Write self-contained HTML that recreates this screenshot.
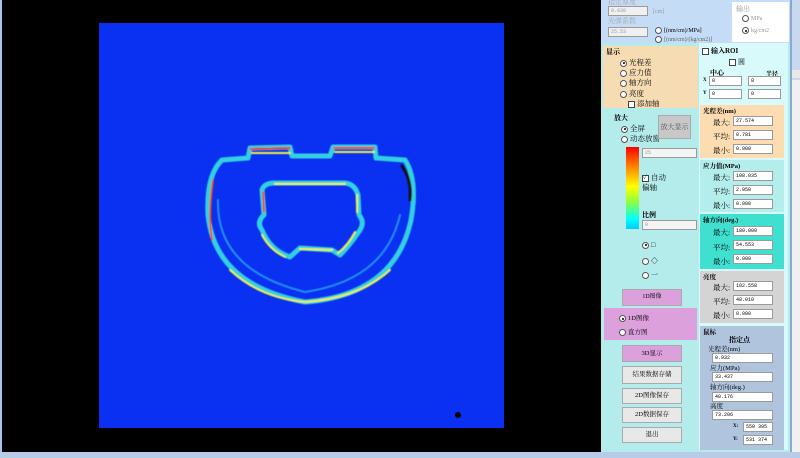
<!DOCTYPE html>
<html><head><meta charset="utf-8"><style>
*{margin:0;padding:0;box-sizing:border-box}
body{width:800px;height:458px;overflow:hidden;background:#000;position:relative;font-family:"Liberation Serif","Noto Serif CJK SC","Noto Sans CJK SC",serif;font-size:7px;color:#000}
.a{position:absolute}
.in{position:absolute;background:#fff;border:1px solid #9a9a9a;font-size:5px;padding-left:2px;line-height:8px;height:10px;font-family:"Liberation Mono",monospace}
.btn{position:absolute;background:#e8e8e8;border:1px solid #aaa;text-align:center;font-size:7px}
.rad{display:inline-block;width:7px;height:7px;border:1px solid #555;border-radius:50%;background:#fff;vertical-align:middle;margin-right:2px;position:relative}
.rad.on::after{content:"";position:absolute;left:1.5px;top:1.5px;width:2px;height:2px;border-radius:50%;background:#000}
.chk{display:inline-block;width:7px;height:7px;border:1px solid #444;background:#fff;vertical-align:middle;margin-right:2px}
b{font-weight:bold}
</style></head><body>
<div class="a" style="left:0;top:0;width:2px;height:458px;background:#a8c4e8"></div>
<div class="a" style="left:0;top:452px;width:800px;height:6px;background:#b8cce8"></div>
<svg class="a" style="left:99px;top:23px" width="405" height="405" viewBox="99 23 405 405">
<defs><filter id="f"><feGaussianBlur stdDeviation="0.5"/></filter></defs>
<rect x="99" y="23" width="405" height="405" fill="#0a30f2"/>
<g fill="none" stroke-linecap="round" stroke-linejoin="round" filter="url(#f)">
<g stroke="#30d0e0" stroke-width="5">
<path d="M222 160 Q206 175 208 215 Q215 285 305 302 Q395 295 411 220 Q418 180 405 160"/>
<path d="M222 160 L248 158 L250 148 L290 147 L292 156 L330 156 L333 147 L375 147 L376 158 L405 160"/>
<path d="M264 215 L262 190 Q264 183 275 183 L345 183 Q355 184 358 195 L359 215 Q365 222 360 230 Q350 245 340 255 L332 250 L300 248 L290 257 Q270 250 262 230 Q256 222 264 215"/>
</g>
<path d="M218 200 Q216 270 305 292 Q385 280 400 215" stroke="#2090f0" stroke-width="2"/>
<g stroke="#f0f040" stroke-width="2">
<path d="M213 180 Q208 215 212 240" stroke="#f05020"/>
<path d="M250 149 L290 148" stroke="#f03020"/>
<path d="M334 148 L374 148" stroke="#f03020"/>
<path d="M252 153 L290 153"/>
<path d="M335 152 L374 152"/>
<path d="M275 184 L345 184"/>
<path d="M264 212 L263 192" stroke="#f04020"/>
<path d="M357 212 L357 195"/>
<path d="M262 235 Q270 250 285 257"/>
<path d="M355 232 Q348 245 338 253"/>
<path d="M300 249 L332 250"/>
<path d="M230 270 Q260 298 305 302 Q360 298 390 270"/>
</g>
<path d="M402 166 Q412 180 410 200" stroke="#101010" stroke-width="3"/>
</g>
<circle cx="458" cy="415" r="3" fill="#000"/>
</svg>
<!-- right panel -->
<div class="a" style="left:601px;top:0;width:189px;height:452px;background:#b4ecec"></div>
<div class="a" style="left:601px;top:0;width:189px;height:43px;background:#c4dcf6"></div>
<div class="a" style="left:790px;top:0;width:10px;height:452px;background:#c8d8ee"></div>
<div class="a" style="left:790px;top:0;width:2px;height:452px;background:#8aa8d0"></div>
<div class="a" style="left:792px;top:70px;width:8px;height:8px;background:#e8e8e8"></div>
<div class="a" style="left:792px;top:80px;width:8px;height:372px;background:#f0f0f0"></div>
<div class="a" style="left:608px;top:-3px;color:#a8a8a8">指定厚度</div>
<div class="in" style="left:608px;top:6px;width:40px;color:#999;background:#f0f0f0">0.030</div>
<div class="a" style="left:653px;top:9px;color:#999;font-size:6px">[cm]</div>
<div class="a" style="left:608px;top:16px;color:#a8a8a8">光弹系数</div>
<div class="in" style="left:608px;top:27px;width:40px;color:#999;background:#f0f0f0">25.53</div>
<div class="a" style="left:655px;top:27px;font-size:6px"><span class="rad"></span>[(nm/cm)/MPa]</div>
<div class="a" style="left:655px;top:36px;font-size:6px;color:#666"><span class="rad"></span>[(nm/cm)/(kg/cm2)]</div>
<div class="a" style="left:732px;top:2px;width:57px;height:40px;background:#fff"></div>
<div class="a" style="left:736px;top:4px;color:#999">输出</div>
<div class="a" style="left:742px;top:15px;color:#999;font-size:6px"><span class="rad"></span>MPa</div>
<div class="a" style="left:742px;top:27px;color:#999;font-size:6px"><span class="rad on"></span>kg/cm2</div>
<!-- display box -->
<div class="a" style="left:603px;top:46px;width:95px;height:62px;background:#f6dcb2"></div>
<div class="a" style="left:606px;top:47px"><b>显示</b></div>
<div class="a" style="left:620px;top:57px;font-size:7.5px"><span class="rad on"></span>光程差</div>
<div class="a" style="left:620px;top:67px;font-size:7.5px"><span class="rad"></span>应力值</div>
<div class="a" style="left:620px;top:77px;font-size:7.5px"><span class="rad"></span>轴方向</div>
<div class="a" style="left:620px;top:88px;font-size:7.5px"><span class="rad"></span>亮度</div>
<div class="a" style="left:628px;top:98px;font-size:7.5px"><span class="chk"></span>添加轴</div>
<div class="a" style="left:614px;top:113px"><b>放大</b></div>
<div class="a" style="left:621px;top:123px;font-size:7.5px"><span class="rad on"></span>全屏</div>
<div class="a" style="left:621px;top:133px;font-size:7.5px"><span class="rad"></span>动态放窗</div>
<div class="btn" style="left:658px;top:115px;width:33px;height:24px;line-height:22px;background:#c8c8c8;color:#555">放大显示</div>
<div class="a" style="left:626px;top:147px;width:13px;height:82px;background:linear-gradient(#f00,#f80 25%,#ff0 48%,#8f4 68%,#0ff 88%,#0cf)"></div>
<div class="in" style="left:642px;top:148px;width:55px;background:#f4f4f4;color:#999">25</div>
<div class="a" style="left:642px;top:172px;font-size:7.5px"><span class="chk" style="font-size:6px;line-height:5px">✓</span>自动</div>
<div class="a" style="left:642px;top:182px;font-size:7.5px">偏轴</div>
<div class="a" style="left:642px;top:210px"><b>比例</b></div>
<div class="in" style="left:642px;top:220px;width:55px;background:#f4f4f4;color:#999">0</div>
<div class="a" style="left:642px;top:241px"><span class="rad on"></span>□</div>
<div class="a" style="left:642px;top:256px"><span class="rad"></span>◇</div>
<div class="a" style="left:642px;top:270px"><span class="rad"></span>一</div>
<div class="btn" style="left:622px;top:289px;width:60px;height:17px;line-height:15px;background:#dca0dc;font-size:6px">1D图像</div>
<div class="a" style="left:604px;top:308px;width:93px;height:32px;background:#dca0dc"></div>
<div class="a" style="left:619px;top:313px;font-size:6.5px"><span class="rad on"></span>1D图像</div>
<div class="a" style="left:619px;top:327px;font-size:6.5px"><span class="rad"></span>直方图</div>
<div class="btn" style="left:622px;top:345px;width:60px;height:17px;line-height:15px;background:#dca0dc;font-size:6.5px">3D显示</div>
<div class="btn" style="left:622px;top:366px;width:60px;height:18px;line-height:16px;font-size:6.5px">结果数据存储</div>
<div class="btn" style="left:622px;top:388px;width:60px;height:16px;line-height:14px;font-size:6.5px">2D图像保存</div>
<div class="btn" style="left:622px;top:407px;width:60px;height:16px;line-height:14px;font-size:6.5px">2D数据保存</div>
<div class="btn" style="left:622px;top:427px;width:60px;height:16px;line-height:14px;font-size:6.5px">退出</div>
<!-- right column -->
<div class="a" style="left:699px;top:43px;width:89px;height:407px;background:#d8fafa"></div>
<div class="a" style="left:702px;top:46px"><span class="chk"></span><b>输入ROI</b></div>
<div class="a" style="left:729px;top:57px"><span class="chk"></span>圆</div>
<div class="a" style="left:710px;top:68px"><b>中心</b></div>
<div class="a" style="left:766px;top:69px;font-size:6px"><b>半径</b></div>
<div class="a" style="left:703px;top:78px;font-size:5px"><b>X</b></div>
<div class="in" style="left:709px;top:76px;width:33px">0</div>
<div class="in" style="left:748px;top:76px;width:33px">0</div>
<div class="a" style="left:703px;top:91px;font-size:5px"><b>Y</b></div>
<div class="in" style="left:709px;top:89px;width:33px">0</div>
<div class="in" style="left:748px;top:89px;width:33px">0</div>
<div class="a" style="left:700px;top:105px;width:84px;height:53px;background:#fcdcb0"></div>
<div class="a" style="left:703px;top:106px;font-size:6.5px"><b>光程差(nm)</b></div>
<div class="a" style="left:713px;top:117px;font-size:7.5px">最大:</div><div class="in" style="left:733px;top:116px;width:40px">27.574</div>
<div class="a" style="left:713px;top:131px;font-size:7.5px">平均:</div><div class="in" style="left:733px;top:130px;width:40px">0.781</div>
<div class="a" style="left:713px;top:145px;font-size:7.5px">最小:</div><div class="in" style="left:733px;top:144px;width:40px">0.000</div>
<div class="a" style="left:700px;top:160px;width:84px;height:52px;background:#b4eeec"></div>
<div class="a" style="left:703px;top:161px;font-size:6.5px"><b>应力值(MPa)</b></div>
<div class="a" style="left:713px;top:172px;font-size:7.5px">最大:</div><div class="in" style="left:733px;top:171px;width:40px">108.035</div>
<div class="a" style="left:713px;top:186px;font-size:7.5px">平均:</div><div class="in" style="left:733px;top:185px;width:40px">2.950</div>
<div class="a" style="left:713px;top:200px;font-size:7.5px">最小:</div><div class="in" style="left:733px;top:199px;width:40px">0.000</div>
<div class="a" style="left:700px;top:214px;width:84px;height:55px;background:#40e0d0"></div>
<div class="a" style="left:703px;top:215px;font-size:6.5px"><b>轴方向(deg.)</b></div>
<div class="a" style="left:713px;top:227px;font-size:7.5px">最大:</div><div class="in" style="left:733px;top:226px;width:40px">180.000</div>
<div class="a" style="left:713px;top:242px;font-size:7.5px">平均:</div><div class="in" style="left:733px;top:240px;width:40px">54.553</div>
<div class="a" style="left:713px;top:256px;font-size:7.5px">最小:</div><div class="in" style="left:733px;top:254px;width:40px">0.000</div>
<div class="a" style="left:700px;top:271px;width:84px;height:52px;background:#d4d4d4"></div>
<div class="a" style="left:703px;top:272px;font-size:6.5px"><b>亮度</b></div>
<div class="a" style="left:713px;top:282px;font-size:7.5px">最大:</div><div class="in" style="left:733px;top:281px;width:40px">102.558</div>
<div class="a" style="left:713px;top:296px;font-size:7.5px">平均:</div><div class="in" style="left:733px;top:295px;width:40px">48.010</div>
<div class="a" style="left:713px;top:310px;font-size:7.5px">最小:</div><div class="in" style="left:733px;top:309px;width:40px">0.000</div>
<div class="a" style="left:700px;top:326px;width:84px;height:124px;background:#b0c4de"></div>
<div class="a" style="left:703px;top:327px;font-size:6.5px"><b>鼠标</b></div>
<div class="a" style="left:729px;top:335px;font-size:7px"><b>指定点</b></div>
<div class="a" style="left:708px;top:344px;font-size:6.5px">光程差(nm)</div>
<div class="in" style="left:712px;top:353px;width:61px">0.932</div>
<div class="a" style="left:710px;top:363px;font-size:6.5px">应力(MPa)</div>
<div class="in" style="left:712px;top:372px;width:61px">33.437</div>
<div class="a" style="left:710px;top:382px;font-size:6.5px">轴方向(deg.)</div>
<div class="in" style="left:712px;top:392px;width:61px">40.176</div>
<div class="a" style="left:710px;top:401px;font-size:6.5px">高度</div>
<div class="in" style="left:712px;top:410px;width:61px">73.206</div>
<div class="a" style="left:733px;top:424px;font-size:5px"><b>X:</b></div>
<div class="in" style="left:743px;top:422px;width:30px">550 395</div>
<div class="a" style="left:733px;top:437px;font-size:5px"><b>Y:</b></div>
<div class="in" style="left:743px;top:435px;width:30px">531 374</div>
</body></html>
